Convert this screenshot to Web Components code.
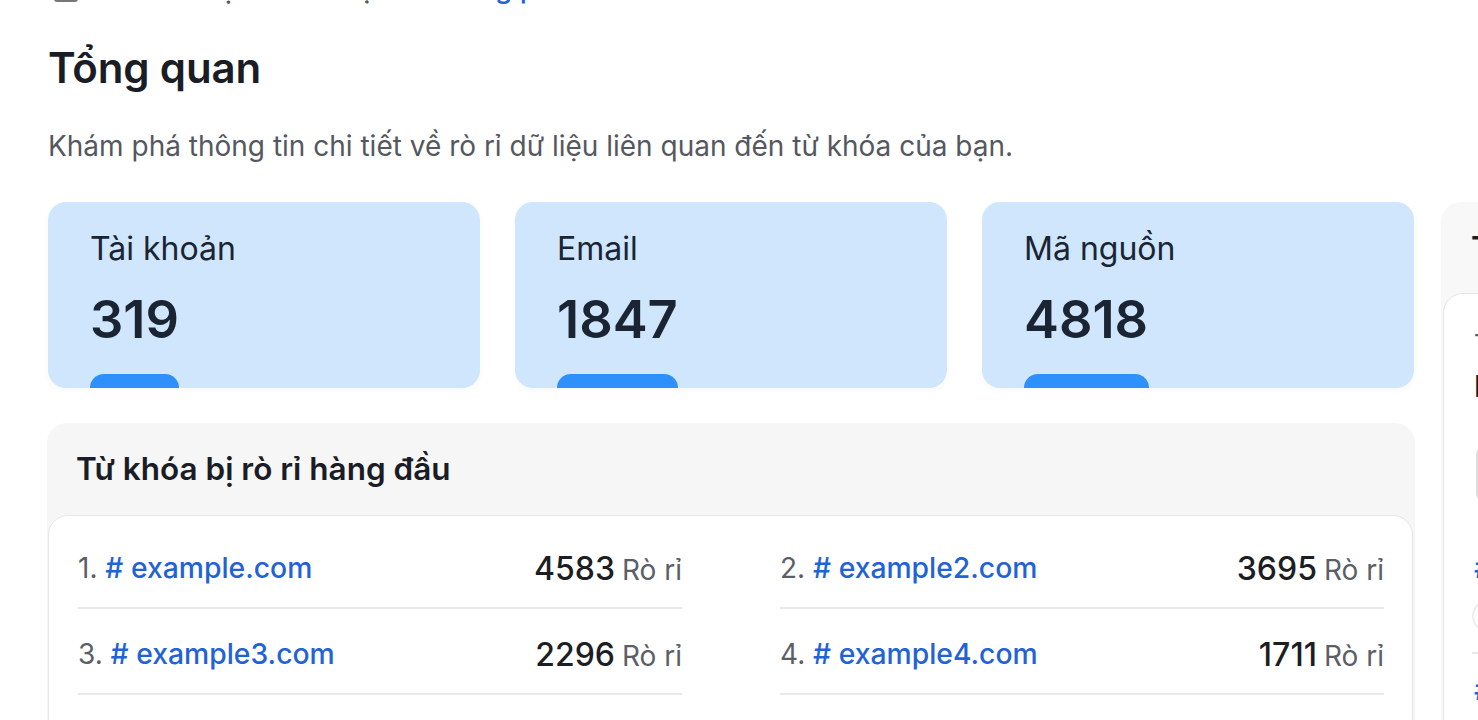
<!DOCTYPE html>
<html>
<head>
<meta charset="utf-8">
<title>Tổng quan</title>
<style>
  html, body { margin: 0; height: 720px; overflow: hidden; background: #fff; }
  body { font-family: Inter, "Noto Sans", sans-serif; color: #1a1d26; }
</style>
</head>
<body>
<overview-page>
  <span slot="crumb">Xem cài đặt ở các mục của <a>Tổng phí</a></span>
  <span slot="title">Tổng quan</span>
  <span slot="desc">Khám phá thông tin chi tiết về rò rỉ dữ liệu liên quan đến từ khóa của bạn.</span>
  <stat-card slot="stats" label="Tài khoản" value="319" btn="89"></stat-card>
  <stat-card slot="stats" label="Email" value="1847" btn="121"></stat-card>
  <stat-card slot="stats" label="Mã nguồn" value="4818" btn="125"></stat-card>
  <panel-box slot="main" heading="Từ khóa bị rò rỉ hàng đầu">
    <keyword-row rank="1." name="# example.com" count="4583"></keyword-row>
    <keyword-row rank="2." name="# example2.com" count="3695"></keyword-row>
    <keyword-row rank="3." name="# example3.com" count="2296"></keyword-row>
    <keyword-row rank="4." name="# example4.com" count="1711"></keyword-row>
  </panel-box>
  <side-panel slot="side"></side-panel>
</overview-page>

<script>
class OverviewPage extends HTMLElement {
  constructor() {
    super();
    this.attachShadow({ mode: "open" });
    this.shadowRoot.innerHTML = `
      <style>
        :host { display: block; padding: 0 0 0 48px; width: 1700px; box-sizing: border-box; }
        .crumb { display: flex; align-items: flex-end; height: 36px; margin-top: -30px; font-size: 28px; line-height: 36px; color: #55585f; white-space: nowrap; }
        .crumb i { width: 24px; height: 28px; margin: 0 12px 4px 6px; box-sizing: border-box; border: 2px solid #777; border-radius: 3px; }
        .crumb ::slotted(span) { color: #55585f; }
        h1 { margin: 37px 0 0; font-size: 42px; line-height: 50px; font-weight: 600; letter-spacing: -0.15px; color: #1a1d26; }
        p { margin: 35px 0 0; font-size: 28px; line-height: 36px; font-weight: 400; color: #55585f; }
        .cols { display: grid; grid-template-columns: 1366px 400px; column-gap: 27px; margin-top: 38px; }
        .stats { display: grid; grid-template-columns: repeat(3, 432px); column-gap: 35px; margin-bottom: 35px; }
      </style>
      <div class="crumb"><i></i><slot name="crumb"></slot></div>
      <h1><slot name="title"></slot></h1>
      <p><slot name="desc"></slot></p>
      <div class="cols">
        <div>
          <div class="stats"><slot name="stats"></slot></div>
          <slot name="main"></slot>
        </div>
        <slot name="side"></slot>
      </div>`;
  }
  connectedCallback() {
    // link colour for the clipped line at the very top
    this.querySelectorAll("a").forEach(a => { a.style.color = "#1f63d6"; a.style.fontWeight = "500"; a.style.marginLeft = "-10px"; });
  }
}
customElements.define("overview-page", OverviewPage);

class StatCard extends HTMLElement {
  constructor() {
    super();
    this.attachShadow({ mode: "open" });
    this.shadowRoot.innerHTML = `
      <style>
        :host { display: block; height: 186px; box-sizing: border-box; padding: 27px 0 0 42px; background: #cfe6fd; border-radius: 18px; overflow: hidden; box-shadow: 0 2px 6px rgba(0,0,0,.03); }
        .label { font-size: 32px; line-height: 40px; color: #1a2433; }
        .value { margin-top: 18px; font-size: 52.4px; line-height: 64px; font-weight: 600; color: #1a2433; }
        .btn { margin: 23px 0 0 0; height: 40px; background: #2e90fa; border-radius: 14px; }
      </style>
      <div class="label"></div>
      <div class="value"></div>
      <div class="btn"></div>`;
  }
  connectedCallback() {
    const root = this.shadowRoot;
    root.querySelector(".label").textContent = this.getAttribute("label");
    root.querySelector(".value").textContent = this.getAttribute("value");
    root.querySelector(".btn").style.width = this.getAttribute("btn") + "px";
  }
}
customElements.define("stat-card", StatCard);

class PanelBox extends HTMLElement {
  constructor() {
    super();
    this.attachShadow({ mode: "open" });
    this.shadowRoot.innerHTML = `
      <style>
        :host { display: block; margin: 0 -1px; background: #f6f6f6; border-radius: 20px; padding: 0 2px 1px 1px; }
        h2 { margin: 0; padding: 26px 0 0 28px; height: 92px; box-sizing: border-box; font-size: 31.5px; line-height: 40px; font-weight: 600; color: #1a1d26; }
        .body { background: #fff; border: 1px solid #e6e6e6; border-radius: 20px; padding: 7px 29px 0; height: 400px; }
        .grid { display: grid; grid-template-columns: 604px 604px; column-gap: 98px; }
      </style>
      <h2></h2>
      <div class="body"><div class="grid"><slot></slot></div></div>`;
  }
  connectedCallback() {
    this.shadowRoot.querySelector("h2").textContent = this.getAttribute("heading");
  }
}
customElements.define("panel-box", PanelBox);

class KeywordRow extends HTMLElement {
  constructor() {
    super();
    this.attachShadow({ mode: "open" });
    this.shadowRoot.innerHTML = `
      <style>
        :host { display: flex; align-items: center; justify-content: space-between; height: 86px; padding-top: 6px; box-sizing: border-box; border-bottom: 2px solid #e9e9e9; font-size: 28px; color: #5c5f66; white-space: nowrap; }
        .name { color: #1f63d6; font-weight: 500; font-size: 28.3px; }
        .count { color: #1c1e24; font-size: 32px; font-weight: 500; margin-right: 7px; }
        .right { display: flex; align-items: baseline; }
      </style>
      <div><span class="rank"></span> <span class="name"></span></div>
      <div class="right"><span class="count"></span><span>Rò rỉ</span></div>`;
  }
  connectedCallback() {
    const root = this.shadowRoot;
    root.querySelector(".rank").textContent = this.getAttribute("rank");
    root.querySelector(".name").textContent = this.getAttribute("name");
    root.querySelector(".count").textContent = this.getAttribute("count");
  }
}
customElements.define("keyword-row", KeywordRow);

class SidePanel extends HTMLElement {
  constructor() {
    super();
    this.attachShadow({ mode: "open" });
    this.shadowRoot.innerHTML = `
      <style>
        :host { display: block; background: #f8f8f8; border-radius: 20px; padding: 0 2px; height: 700px; }
        h2 { margin: 0; padding: 26px 0 0 28px; height: 91px; box-sizing: border-box; font-size: 31.5px; line-height: 40px; font-weight: 600; color: #1a1d26; }
        .body { display: flex; flex-direction: column; align-items: flex-start; background: #fff; border: 1px solid #e6e6e6; border-radius: 20px; padding: 32px 30px; height: 600px; white-space: nowrap; }
        .sub { font-size: 26px; line-height: 36px; color: #55585f; }
        .big { margin-top: 4px; font-size: 30px; line-height: 40px; font-weight: 600; color: #1a1d26; }
        .box { margin: 39px 0 0 2px; width: 300px; height: 58px; box-sizing: border-box; border: 2px solid #dedede; border-radius: 10px; background: #fafafa; }
        .tag { font-size: 28px; line-height: 36px; font-weight: 500; color: #1f63d6; }
        .dot { margin: 14px 0 20px -2px; width: 32px; height: 32px; box-sizing: border-box; border: 2px solid #eee; border-radius: 50%; }
        hr { margin: 0 0 18px -2px; width: 300px; height: 2px; border: 0; background: #e9e9e9; }
      </style>
      <h2>Tổng hợp</h2>
      <div class="body">
        <div class="sub">Tìm kiếm</div>
        <div class="big">Khóa</div>
        <div class="box"></div>
        <div class="tag" style="margin-top:47px"># example.com</div>
        <div class="dot"></div>
        <hr>
        <div class="tag"># example2.com</div>
      </div>`;
  }
}
customElements.define("side-panel", SidePanel);
</script>
</body>
</html>
